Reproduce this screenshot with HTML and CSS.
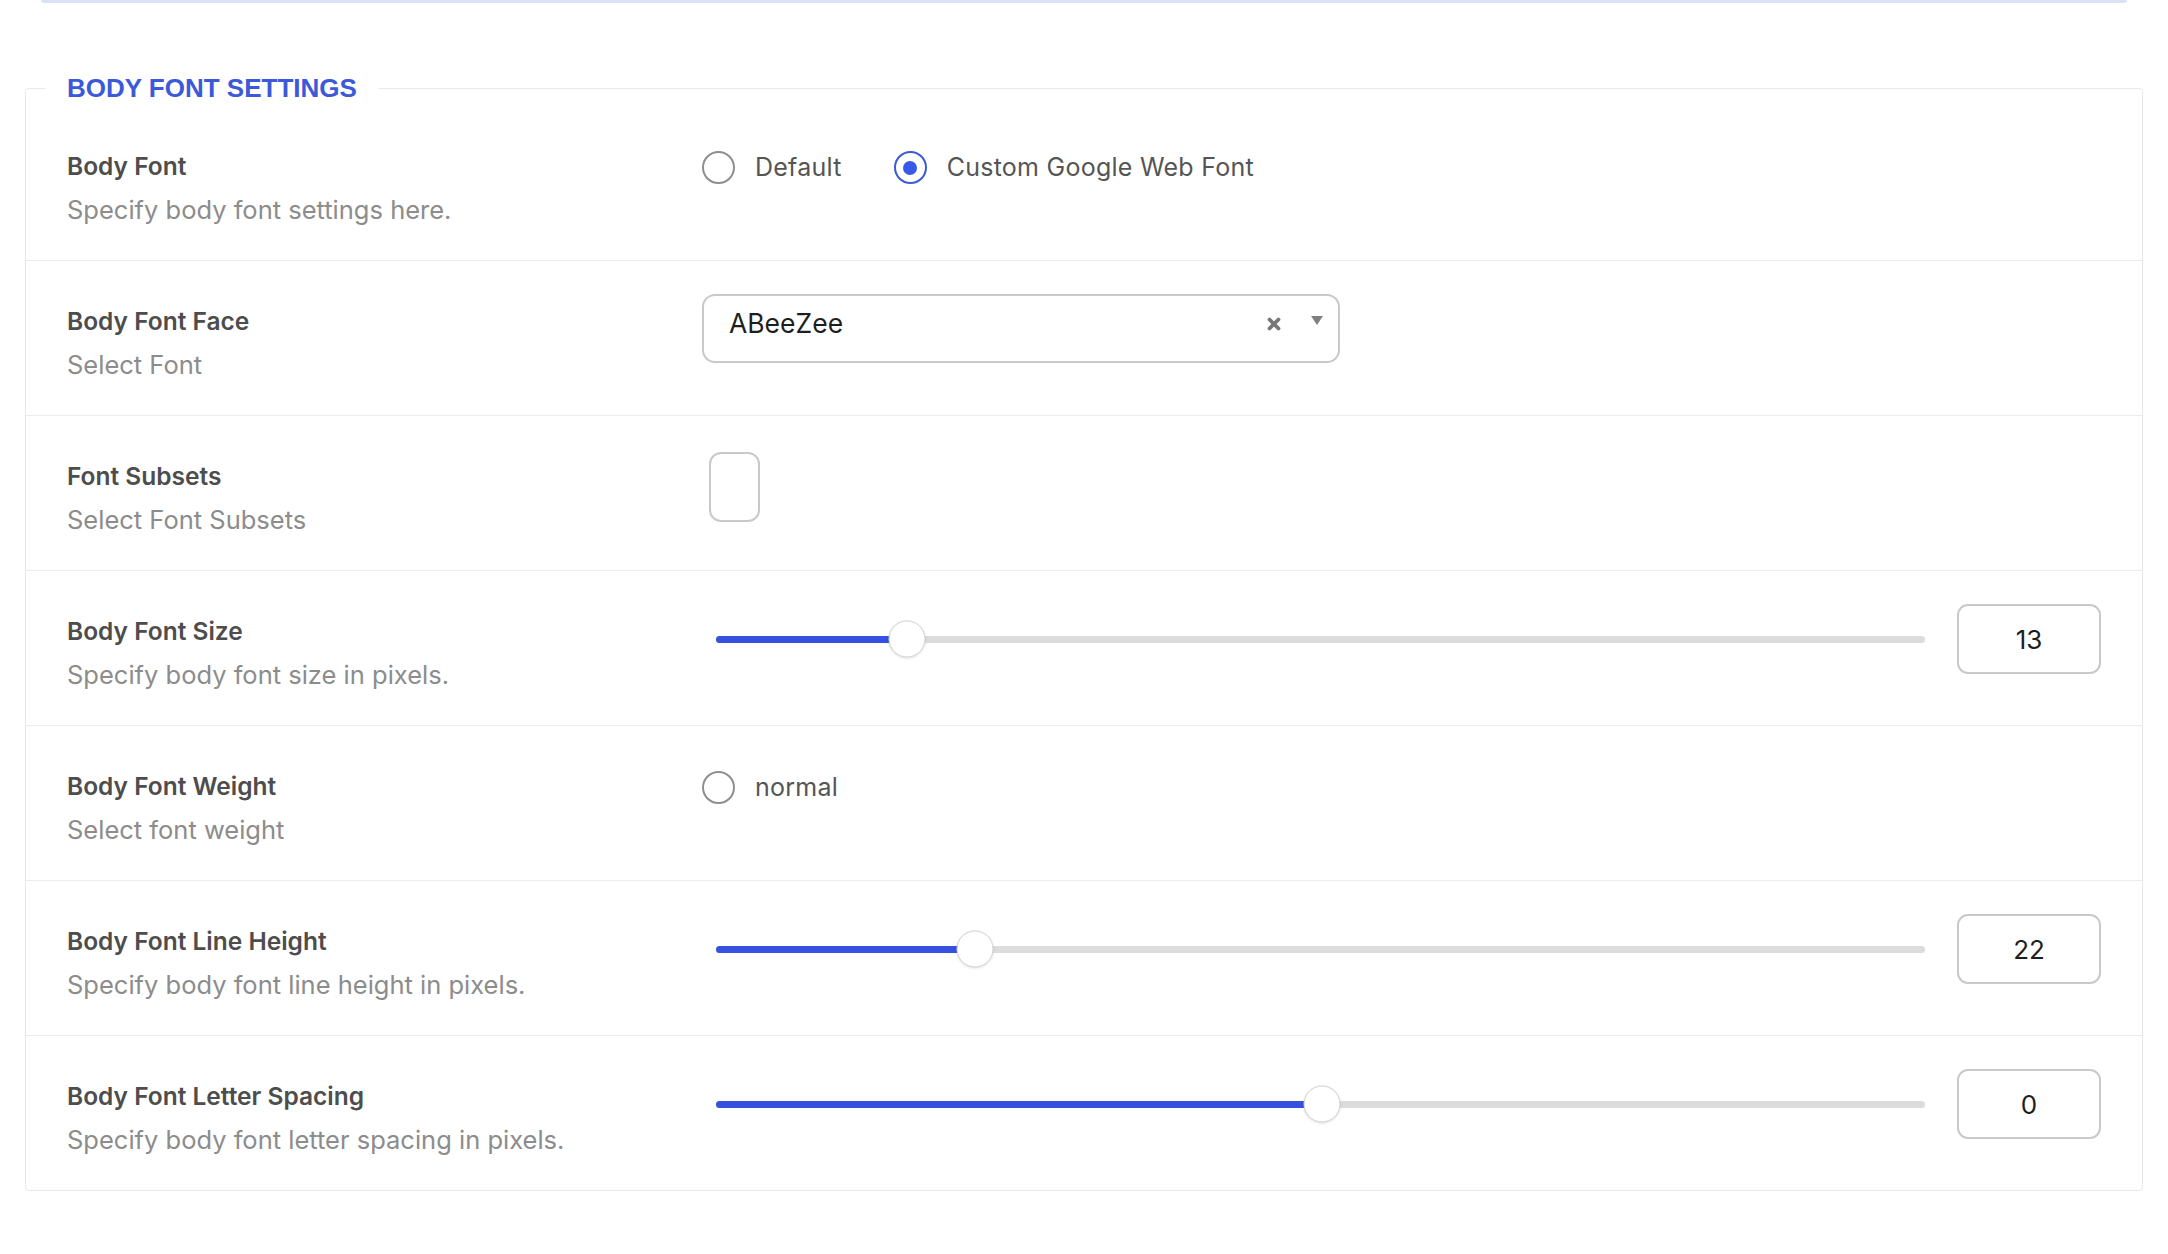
FILE: index.html
```html
<!DOCTYPE html>
<html lang="en">
<head>
    <meta charset="UTF-8">
    <meta name="viewport" content="width=device-width, initial-scale=1.0">
    <title>Body Font Settings</title>
    <link rel="stylesheet" href="styles.css">
</head>
<body>
    <div class="top-edge"></div>
    <fieldset class="settings-group">
        <legend>BODY FONT SETTINGS</legend>

        <div class="setting-row">
            <div class="setting-info">
                <h4>Body Font</h4>
                <p>Specify body font settings here.</p>
            </div>
            <div class="setting-control">
                <div class="radio-group">
                    <label class="radio"><span class="radio-dot"></span>Default</label>
                    <label class="radio checked"><span class="radio-dot"></span>Custom Google Web Font</label>
                </div>
            </div>
        </div>

        <div class="setting-row">
            <div class="setting-info">
                <h4>Body Font Face</h4>
                <p>Select Font</p>
            </div>
            <div class="setting-control">
                <div class="select-box">
                    <span class="select-value">ABeeZee</span>
                    <svg class="select-clear" width="16" height="16" viewBox="0 0 16 16">
                        <path d="M3.5 3.5 L12.5 12.5 M12.5 3.5 L3.5 12.5" stroke="#777" stroke-width="3.8" stroke-linecap="round"/>
                    </svg>
                    <svg class="select-arrow" width="14" height="12" viewBox="0 0 14 12">
                        <path d="M1 2 L13 2 L7 11 Z" fill="#808080"/>
                    </svg>
                </div>
            </div>
        </div>

        <div class="setting-row">
            <div class="setting-info">
                <h4>Font Subsets</h4>
                <p>Select Font Subsets</p>
            </div>
            <div class="setting-control">
                <div class="subset-box"></div>
            </div>
        </div>

        <div class="setting-row">
            <div class="setting-info">
                <h4>Body Font Size</h4>
                <p>Specify body font size in pixels.</p>
            </div>
            <div class="setting-control slider-control">
                <div class="range">
                    <div class="range-fill" style="width: 15.8%"></div>
                    <span class="range-thumb" style="left: 15.8%"></span>
                </div>
                <div class="number-box">13</div>
            </div>
        </div>

        <div class="setting-row">
            <div class="setting-info">
                <h4>Body Font Weight</h4>
                <p>Select font weight</p>
            </div>
            <div class="setting-control">
                <div class="radio-group">
                    <label class="radio"><span class="radio-dot"></span>normal</label>
                </div>
            </div>
        </div>

        <div class="setting-row">
            <div class="setting-info">
                <h4>Body Font Line Height</h4>
                <p>Specify body font line height in pixels.</p>
            </div>
            <div class="setting-control slider-control">
                <div class="range">
                    <div class="range-fill" style="width: 21.4%"></div>
                    <span class="range-thumb" style="left: 21.4%"></span>
                </div>
                <div class="number-box">22</div>
            </div>
        </div>

        <div class="setting-row">
            <div class="setting-info">
                <h4>Body Font Letter Spacing</h4>
                <p>Specify body font letter spacing in pixels.</p>
            </div>
            <div class="setting-control slider-control">
                <div class="range">
                    <div class="range-fill" style="width: 50.1%"></div>
                    <span class="range-thumb" style="left: 50.1%"></span>
                </div>
                <div class="number-box">0</div>
            </div>
        </div>
    </fieldset>
</body>
</html>
```

FILE: styles.css
```css
body {
    margin: 0;
    font-family: Inter, "Liberation Sans", Arial, sans-serif;
    background: #fff;
    color: #555;
}
.top-edge {
    height: 3px;
    margin: 0 41px;
    background-color: #dae2f8;
    border-radius: 0 0 3px 3px;
}
.settings-group {
    margin: 67px 25px 0;
    padding: 0;
    border: 1px solid #e9e9e9;
    border-radius: 4px;
    box-shadow: 0 1px 2px rgba(0, 0, 0, 0.04);
}
.settings-group legend {
    margin-left: 19px;
    padding: 0 22px;
    font-family: "Liberation Sans", Arial, sans-serif;
    font-size: 26px;
    line-height: 36px;
    font-weight: bold;
    color: #3b59d9;
}
.setting-row {
    display: grid;
    grid-template-columns: 635px 1fr;
    align-items: start;
    padding: 33px 41px 34px;
    border-bottom: 1px solid #ececec;
}
.setting-row:last-child {
    border-bottom: none;
}
.setting-info {
    padding-top: 11px;
}
.setting-info h4 {
    margin: 0;
    font-size: 24.5px;
    line-height: 32px;
    font-weight: 600;
    color: #4d4d4d;
}
.setting-info p {
    margin: 12px 0 0;
    font-size: 25.5px;
    line-height: 32px;
    color: #8c8c8c;
}
.radio-group {
    display: flex;
    gap: 52px;
    margin-top: 12px;
}
.radio {
    display: flex;
    align-items: center;
    gap: 20px;
    font-size: 25px;
    line-height: 33px;
    letter-spacing: 0.25px;
    color: #555;
}
.radio-dot {
    width: 33px;
    height: 33px;
    box-sizing: border-box;
    border: 2px solid #8e8e8e;
    border-radius: 50%;
    display: flex;
    align-items: center;
    justify-content: center;
}
.radio.checked .radio-dot {
    border-color: #3b59d9;
}
.radio.checked .radio-dot::after {
    content: "";
    width: 14px;
    height: 14px;
    border-radius: 50%;
    background-color: #3858e9;
}
.select-box {
    width: 638px;
    height: 69px;
    box-sizing: border-box;
    display: flex;
    align-items: flex-start;
    padding: 12px 14px 0 25px;
    border: 2px solid #c9c9c9;
    border-radius: 13px;
}
.select-value {
    flex: 1;
    font-size: 26.5px;
    line-height: 30px;
    color: #1e1e1e;
}
.select-clear {
    margin-top: 8px;
    margin-right: 28px;
}
.select-arrow {
    margin-top: 6px;
}
.subset-box {
    width: 51px;
    height: 70px;
    box-sizing: border-box;
    margin: 3px 0 0 7px;
    border: 2px solid #c9c9c9;
    border-radius: 12px;
}
.slider-control {
    display: flex;
    align-items: center;
}
.range {
    position: relative;
    flex: 1;
    height: 7px;
    margin: 0 32px 0 14px;
    background-color: #dcdcdc;
    border-radius: 4px;
}
.range-fill {
    height: 100%;
    background-color: #3651e0;
    border-radius: 4px;
}
.range-thumb {
    position: absolute;
    top: 50%;
    width: 37px;
    height: 37px;
    box-sizing: border-box;
    transform: translate(-50%, -50%);
    background: #fff;
    border: 1px solid #d2d2d2;
    border-radius: 50%;
    box-shadow: 0 1px 3px rgba(0, 0, 0, 0.12);
}
.number-box {
    width: 144px;
    height: 70px;
    box-sizing: border-box;
    display: flex;
    align-items: center;
    justify-content: center;
    border: 2px solid #c9c9c9;
    border-radius: 11px;
    font-size: 26px;
    color: #1e1e1e;
}
```
